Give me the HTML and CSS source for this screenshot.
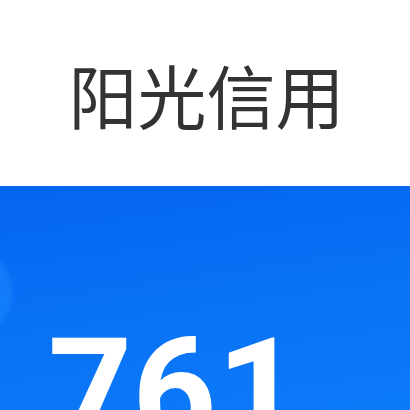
FILE: index.html
```html
<!DOCTYPE html>
<html lang="zh">
<head>
<meta charset="utf-8">
<link rel="stylesheet" href="styles.css">
</head>
<body>
<div class="page">
  <header class="head">
    <h1 class="title">阳光信用</h1>
  </header>
  <section class="card">
    <div class="glow"></div>
    <div class="score">761</div>
  </section>
</div>
</body>
</html>
```
FILE: styles.css
```css
html, body {
  margin: 0;
  padding: 0;
  background: #ffffff;
}
.page {
  width: 410px;
  height: 410px;
  overflow: hidden;
  display: flex;
  flex-direction: column;
}
.head {
  height: 186px;
  box-sizing: border-box;
  padding-top: 60px;
  padding-left: 3px;
  display: flex;
  justify-content: center;
  background: #ffffff;
}
.title {
  margin: 0;
  font-family: "Noto Sans CJK SC", "Noto Sans", sans-serif;
  font-weight: 400;
  font-size: 69px;
  line-height: 1;
  color: #333333;
}
.card {
  position: relative;
  flex: 1;
  overflow: hidden;
  background: linear-gradient(172deg, #0564ef 0%, #086ff5 40%, #0c7bf8 100%);
  padding-top: 133px;
  padding-left: 48px;
  box-sizing: border-box;
}
.glow {
  position: absolute;
  left: -110px;
  top: 52px;
  width: 122px;
  height: 110px;
  border-radius: 50%;
  background: rgba(40, 150, 255, 0.35);
  filter: blur(2px);
}
.score {
  position: relative;
  font-family: Roboto, "Liberation Sans", sans-serif;
  font-weight: 700;
  font-size: 147px;
  line-height: 1;
  color: #ffffff;
}
```
